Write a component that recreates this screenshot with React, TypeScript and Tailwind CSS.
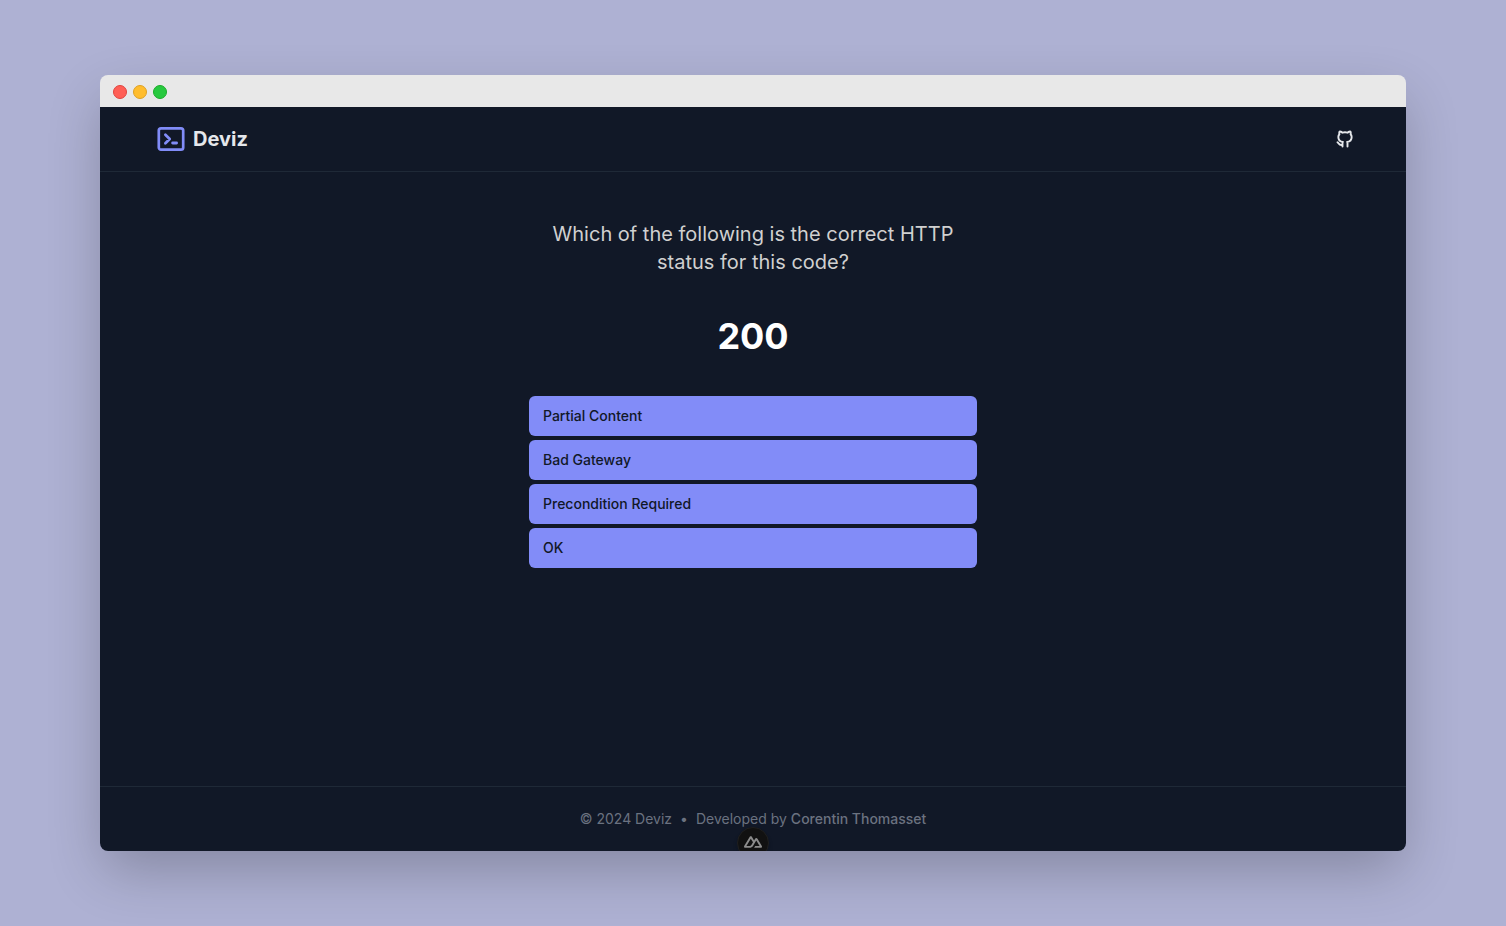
const answers = ["Partial Content", "Bad Gateway", "Precondition Required", "OK"];

function TerminalLogo() {
  return (
    <svg viewBox="0 0 28 24" className="h-6 w-7 text-[#818cf8]" fill="none" stroke="currentColor" strokeLinecap="round" strokeLinejoin="round" aria-hidden="true">
      <rect x="1.8" y="1.4" width="24.4" height="21.2" rx="2.2" strokeWidth="2.7" />
      <path d="M8.4 7.8l4.3 4.2-4.3 4.2M15.6 16h4" strokeWidth="2.8" />
    </svg>
  );
}

function GithubIcon() {
  return (
    <svg viewBox="0 0 24 24" className="size-5" fill="none" stroke="currentColor" strokeWidth="2.3" strokeLinecap="round" strokeLinejoin="round" aria-hidden="true">
      <path d="M9 19c-4.3 1.4-4.3-2.5-6-3m12 5v-3.5c0-1 .1-1.4-.5-2 2.8-.3 5.5-1.4 5.5-6a4.6 4.6 0 0 0-1.3-3.2 4.2 4.2 0 0 0-.1-3.2s-1.1-.3-3.5 1.3a12.3 12.3 0 0 0-6.2 0C6.5 2.8 5.4 3.1 5.4 3.1a4.2 4.2 0 0 0-.1 3.2A4.6 4.6 0 0 0 4 9.5c0 4.6 2.7 5.7 5.5 6-.6.6-.6 1.2-.5 2V21" />
    </svg>
  );
}

function NuxtLogo() {
  return (
    <svg viewBox="0 0 24 24" className="size-[18px]" fill="currentColor" aria-hidden="true">
      <path d="M13.4642 19.8295h8.9218c.2834 0 .5618-.0723.8072-.2098a1.5899 1.5899 0 0 0 .5908-.5732 1.5293 1.5293 0 0 0 .216-.783 1.529 1.529 0 0 0-.2167-.7828L17.7916 7.4142a1.5904 1.5904 0 0 0-.5907-.573 1.6524 1.6524 0 0 0-.807-.2099c-.2833 0-.5616.0724-.807.2098a1.5904 1.5904 0 0 0-.5907.5731L13.4642 9.99l-2.9954-5.0366a1.5913 1.5913 0 0 0-.591-.573 1.6533 1.6533 0 0 0-.8071-.2098c-.2834 0-.5617.0723-.8072.2097a1.5913 1.5913 0 0 0-.591.573L.2168 17.4808A1.5292 1.5292 0 0 0 0 18.2635c-.0001.2749.0744.545.216.783a1.59 1.59 0 0 0 .5908.5732c.2454.1375.5238.2098.8072.2098h5.6003c2.219 0 3.8554-.9454 4.9813-2.7899l2.7337-4.5922L16.3935 9.99l4.3944 7.382h-5.8586ZM7.123 17.3694l-3.9083-.0009 5.8586-9.8421 2.9232 4.921-1.9572 3.2892c-.7478 1.1967-1.5972 1.6328-2.9163 1.6328z" />
    </svg>
  );
}

export default function App() {
  return (
    <div className="flex min-h-screen flex-col bg-[#aeb1d3] px-[100px] py-[75px] font-['Inter',sans-serif]">
      <div className="flex grow flex-col rounded-lg shadow-[0_22px_56px_-4px_rgba(0,0,0,0.24)]">
        <div className="flex h-8 items-center gap-1.5 rounded-t-lg bg-[#e8e8e8] px-[13px] pt-0.5">
          <span className="size-3.5 rounded-full border border-[#e0443e] bg-[#ff5f56]" />
          <span className="size-3.5 rounded-full border border-[#dea123] bg-[#ffbd2e]" />
          <span className="size-3.5 rounded-full border border-[#1aab29] bg-[#27c93f]" />
        </div>

        <div className="relative flex grow flex-col overflow-hidden rounded-b-lg bg-[#111827]">
          <header className="border-b border-[#1f2937]">
            <div className="mx-auto flex h-16 max-w-[1216px] items-center justify-between pl-3">
              <a href="#" className="flex items-center gap-2 text-xl font-bold text-[#e5e7eb]">
                <TerminalLogo />
                Deviz
              </a>
              <a href="#" aria-label="GitHub" className="p-1.5 text-[#e5e7eb]">
                <GithubIcon />
              </a>
            </div>
          </header>

          <main className="mx-auto flex w-full max-w-md grow flex-col pt-12">
            <h1 className="px-4 text-center text-xl font-normal text-[#d0d0d0]">
              Which of the following is the correct HTTP status for this code?
            </h1>
            <p className="my-10 text-center text-4xl font-bold text-white">200</p>
            <div className="flex flex-col gap-1">
              {answers.map((answer) => (
                <button key={answer} type="button" className="h-10 rounded-md bg-[#828cf8] px-3.5 text-left text-sm font-medium text-[#111827]">
                  {answer}
                </button>
              ))}
            </div>
          </main>

          <footer className="flex h-[65px] items-center justify-center gap-2 border-t border-[#1f2937] text-sm text-[#6b7280]">
            <span>© 2024 Deviz</span>
            <span>•</span>
            <span>
              Developed by <a href="#" className="font-medium">Corentin Thomasset</a>
            </span>
          </footer>

          <button type="button" aria-label="Open Nuxt DevTools" className="absolute -bottom-2 left-1/2 flex size-8 -translate-x-1/2 items-center justify-center rounded-full border border-[#1f1f1f] bg-[#111] pb-0.5 text-[#8c8c8c] shadow-md">
            <NuxtLogo />
          </button>
        </div>
      </div>
    </div>
  );
}
